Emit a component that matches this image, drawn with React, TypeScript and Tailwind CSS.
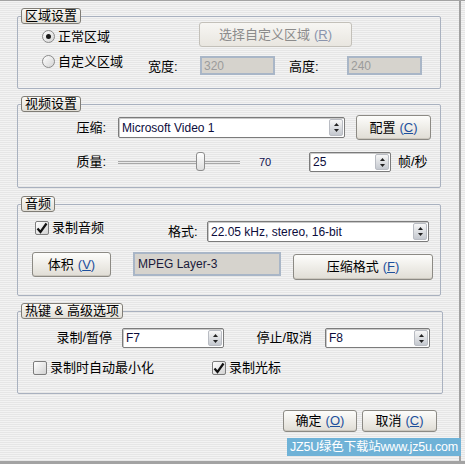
import React from "react";

const Key = ({ k, dim }: { k: string; dim?: boolean }) => (
  <span className={`ml-[4px] ${dim ? "text-[#8a94ad]" : "text-[#1d4f9c]"}`}>
    (<span className="underline underline-offset-[1px]">{k}</span>)
  </span>
);

const Btn = ({
  children,
  className,
  disabled,
}: {
  children: React.ReactNode;
  className: string;
  disabled?: boolean;
}) => (
  <div
    className={`flex shrink-0 items-center justify-center rounded-[3px] border bg-gradient-to-b text-[13px] ${
      disabled
        ? "border-[#c3c0b9] from-[#f7f6f3] to-[#e9e6e0] text-[#8b8b8b]"
        : "border-[#8c8a84] from-[#fdfdfb] to-[#e0ddd5] text-black shadow-[inset_0_-1px_0_#cbc7be]"
    } ${className}`}
  >
    {children}
  </div>
);

const Spin = () => (
  <div className="my-[1px] mr-[1px] flex w-[14px] flex-col items-center justify-center gap-[3px] rounded-[2px] border border-[#b9bcc3] bg-gradient-to-b from-[#f7f7f7] to-[#c4c8cf]">
    <svg width="5" height="3">
      <path d="M2.5 0L5 3H0z" fill="#222" />
    </svg>
    <svg width="5" height="3">
      <path d="M0 0H5L2.5 3z" fill="#222" />
    </svg>
  </div>
);

const Combo = ({ value, className }: { value: string; className: string }) => (
  <div
    className={`flex shrink-0 rounded-[2px] border border-[#7b7b7b] bg-white shadow-[inset_1px_1px_0_#c9c9c9] ${className}`}
  >
    <div className="flex flex-1 items-center pl-[3px] text-[12px] text-[#0c0c3c]">{value}</div>
    <Spin />
  </div>
);

const Field = ({ value, className }: { value: string; className: string }) => (
  <div
    className={`flex shrink-0 items-center border-2 border-[#a9b6c7] bg-[#d6d3cd] pl-[2px] text-[12px] text-[#9b9b9b] ${className}`}
  >
    {value}
  </div>
);

const Radio = ({ on }: { on?: boolean }) => (
  <div className="flex h-[13px] w-[13px] shrink-0 items-center justify-center rounded-full border border-[#8a8a8a] bg-gradient-to-br from-[#ffffff] to-[#d4d4d4]">
    {on && <div className="h-[5px] w-[5px] rounded-full bg-[#1a1a1a]" />}
  </div>
);

const Check = ({ on }: { on?: boolean }) => (
  <div className="flex h-[14px] w-[14px] shrink-0 items-center justify-center rounded-[2px] border border-[#7c7c7c] bg-gradient-to-br from-[#ffffff] to-[#d2d2d2]">
    {on && (
      <svg width="12" height="12" viewBox="0 0 12 12">
        <path d="M1.5 6.5L4.5 10L10.5 1.5" stroke="#111" strokeWidth="2.2" fill="none" />
      </svg>
    )}
  </div>
);

const Group = ({
  title,
  children,
  className,
}: {
  title: string;
  children: React.ReactNode;
  className: string;
}) => (
  <fieldset className={`rounded-[2px] border border-[#a9b1bf] ${className}`}>
    <legend className="ml-[3px] h-[16px] rounded-[3px] border border-[#807d76] bg-gradient-to-b from-[#faf9f6] to-[#e1ded6] px-[3px] text-[13px] leading-[14px]">
      {title}
    </legend>
    {children}
  </fieldset>
);

export default function App() {
  return (
    <div className="flex h-[464px] w-[465px] border-t border-b-[3px] border-[#a3a3a3] bg-[repeating-linear-gradient(to_bottom,#f3f3f3_0px,#f3f3f3_1px,#e6e6e6_1px,#e6e6e6_2px)] font-['Liberation_Sans','Noto_Sans_CJK_SC',sans-serif] text-black">
      <div className="relative w-[459px] pl-[17px]">
        <Group title="区域设置" className="mt-[7px] w-[424px] pb-[12px]">
          <div className="-mt-[2px] flex h-[25px]">
            <div className="flex w-[181px] items-start pl-[24px] pt-[8px]">
              <Radio on />
              <span className="ml-[3px] text-[13px] leading-[13px]">正常区域</span>
            </div>
            <Btn disabled className="h-[25px] w-[153px]">
              选择自定义区域
              <Key k="R" dim />
            </Btn>
          </div>
          <div className="mt-[7px] flex h-[22px]">
            <div className="flex w-[130px] items-start pl-[24px] pt-[1px]">
              <Radio />
              <span className="ml-[3px] text-[13px] leading-[13px]">自定义区域</span>
            </div>
            <span className="mt-[6px] w-[52px] text-[13px] leading-[13px]">宽度:</span>
            <Field value="320" className="mt-[2px] h-[19px] w-[75px]" />
            <span className="ml-[14px] mt-[6px] w-[58px] text-[13px] leading-[13px]">高度:</span>
            <Field value="240" className="mt-[2px] h-[19px] w-[75px]" />
          </div>
        </Group>

        <Group title="视频设置" className="mt-[7px] w-[424px] pb-[15px]">
          <div className="mt-[3px] flex h-[25px] items-center">
            <span className="w-[100px] pr-[12px] text-right text-[13px]">压缩:</span>
            <Combo value="Microsoft Video 1" className="h-[21px] w-[227px]" />
            <Btn className="ml-[11px] h-[25px] w-[75px]">
              配置
              <Key k="C" />
            </Btn>
          </div>
          <div className="mt-[12px] flex h-[20px] items-center">
            <span className="w-[100px] pr-[12px] text-right text-[13px]">质量:</span>
            <div className="relative h-[20px] w-[122px]">
              <div className="absolute left-0 right-0 top-[9px] h-[3px] border-y border-[#a8a8a8] bg-[#e9e9e9]" />
              <div className="absolute left-[78px] top-0 h-[19px] w-[9px] rounded-[3px] border border-[#8d8d8d] bg-gradient-to-b from-[#ffffff] to-[#dedede]" />
            </div>
            <span className="ml-[19px] w-[50px] text-[11px] text-[#101050]">70</span>
            <Combo value="25" className="h-[20px] w-[82px]" />
            <span className="ml-[7px] text-[13px]">帧/秒</span>
          </div>
        </Group>

        <Group title="音频" className="mt-[8px] w-[424px] pb-[15px]">
          <div className="mt-[9px] flex h-[21px]">
            <div className="flex w-[150px] items-start pl-[17px]">
              <Check on />
              <span className="ml-[3px] text-[13px] leading-[14px]">录制音频</span>
            </div>
            <span className="mt-[4px] w-[39px] text-[13px] leading-[14px]">格式:</span>
            <Combo value="22.05 kHz, stereo, 16-bit" className="h-[21px] w-[222px]" />
          </div>
          <div className="mt-[10px] flex h-[28px] items-start">
            <Btn className="ml-[14px] h-[25px] w-[79px]">
              体积
              <Key k="V" />
            </Btn>
            <div className="ml-[22px] flex h-[24px] w-[148px] items-center border-2 border-[#a9b6c7] bg-[#d6d3cd] pl-[3px] text-[12px] text-[#1a1a3a]">
              MPEG Layer-3
            </div>
            <Btn className="ml-[12px] mt-[2px] h-[26px] w-[140px]">
              压缩格式
              <Key k="F" />
            </Btn>
          </div>
        </Group>

        <Group title="热键 & 高级选项" className="mt-[7px] w-[426px] pb-[18px]">
          <div className="mt-[9px] flex h-[20px] items-center">
            <span className="w-[104px] pr-[10px] text-right text-[13px]">录制/暂停</span>
            <Combo value="F7" className="h-[20px] w-[102px]" />
            <span className="w-[101px] pr-[13px] text-right text-[13px]">停止/取消</span>
            <Combo value="F8" className="h-[20px] w-[105px]" />
          </div>
          <div className="mt-[13px] flex h-[14px] items-center">
            <div className="flex w-[194px] items-center pl-[15px]">
              <Check />
              <span className="ml-[3px] text-[13px]">录制时自动最小化</span>
            </div>
            <Check on />
            <span className="ml-[3px] text-[13px]">录制光标</span>
          </div>
        </Group>

        <div className="mt-[16px] flex">
          <Btn className="ml-[266px] h-[22px] w-[74px]">
            确定
            <Key k="O" />
          </Btn>
          <Btn className="ml-[5px] h-[22px] w-[75px]">
            取消
            <Key k="C" />
          </Btn>
        </div>

        <div className="absolute bottom-[5px] left-[287px] flex h-[18px] w-[174px] items-center justify-center bg-[#6fb2d7] text-[12.5px] tracking-[-0.2px] text-white">
          JZ5U绿色下载站www.jz5u.com
        </div>
      </div>
      <div className="w-[6px] border-l-2 border-[#a0a0a0]" />
    </div>
  );
}
